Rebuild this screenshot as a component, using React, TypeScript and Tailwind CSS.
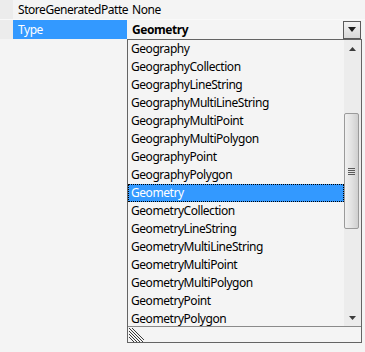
import React, { FC } from "react";

const items = [
  "Geography",
  "GeographyCollection",
  "GeographyLineString",
  "GeographyMultiLineString",
  "GeographyMultiPoint",
  "GeographyMultiPolygon",
  "GeographyPoint",
  "GeographyPolygon",
  "Geometry",
  "GeometryCollection",
  "GeometryLineString",
  "GeometryMultiLineString",
  "GeometryMultiPoint",
  "GeometryMultiPolygon",
  "GeometryPoint",
  "GeometryPolygon",
];

const selected = "Geometry";

const ScrollBar: FC = () => (
  <div className="w-[17px] h-full bg-[#ececec] flex flex-col items-center">
    <div className="h-[17px] w-full flex items-center justify-center">
      <svg width="7" height="4" viewBox="0 0 7 4">
        <polygon points="3.5,0 7,4 0,4" fill="#3c3c3c" />
      </svg>
    </div>
    <div className="h-[56px]" />
    <div className="w-[15px] h-[116px] -ml-[2px] rounded-[2px] border border-[#9a9a9a] bg-gradient-to-r from-[#f0f0f0] via-[#e2e2e2] to-[#cfcfcf] flex flex-col items-center justify-center gap-[1px]">
      <div className="w-[7px] h-[1px] bg-[#5a5a5a]" />
      <div className="w-[7px] h-[1px] bg-[#5a5a5a]" />
      <div className="w-[7px] h-[1px] bg-[#5a5a5a]" />
      <div className="w-[7px] h-[1px] bg-[#5a5a5a]" />
    </div>
    <div className="flex-1" />
    <div className="h-[17px] w-full flex items-center justify-center">
      <svg width="7" height="4" viewBox="0 0 7 4">
        <polygon points="0,0 7,0 3.5,4" fill="#3c3c3c" />
      </svg>
    </div>
  </div>
);

const App: FC = () => {
  return (
    <div className="w-[365px] h-[352px] bg-[#f4f4f4] text-[12px] tracking-[-0.45px] text-black font-['Noto_Sans',sans-serif] overflow-hidden">
      <div className="flex h-[20px] border-b border-[#f9f9f9]">
        <div className="w-[13px] bg-[#ececec]" />
        <div className="w-[114px] pl-[5px] leading-[19px] whitespace-nowrap">StoreGeneratedPatte</div>
        <div className="pl-[5px] leading-[19px]">None</div>
      </div>
      <div className="flex h-[19px]">
        <div className="w-[13px] bg-[#ececec]" />
        <div className="w-[114px] pl-[5px] leading-[19px] bg-[#3399ff] text-white">Type</div>
        <div className="w-[234px] flex items-center justify-between">
          <span className="pl-[5px] font-bold leading-[19px]">Geometry</span>
          <div className="w-[18px] h-[18px] border border-[#5a5a5a] bg-gradient-to-b from-[#f2f2f2] to-[#d8d8d8] flex items-center justify-center">
            <svg width="8" height="5" viewBox="0 0 8 5">
              <polygon points="0,0 8,0 4,5" fill="#1e1e1e" />
            </svg>
          </div>
        </div>
      </div>
      <div className="ml-[127px] w-[235px] h-[304px] border border-[#646464] bg-[#f4f4f4] flex flex-col">
        <div className="flex h-[286px]">
          <div className="flex-1 overflow-hidden">
            {items.map((it) => (
              <div
                key={it}
                className={
                  it === selected
                    ? "h-[18px] pl-[3px] leading-[18px] bg-[#3399ff] text-white outline outline-1 outline-dotted outline-black -outline-offset-1"
                    : "h-[18px] pl-[3px] leading-[18px] whitespace-nowrap"
                }
              >
                {it}
              </div>
            ))}
          </div>
          <ScrollBar />
        </div>
        <div className="flex-1 border-t border-[#8a8a8a] flex items-end">
          <svg width="16" height="15" viewBox="0 0 16 15">
            <g stroke="#3a3a3a" strokeWidth="1">
              <line x1="1" y1="1" x2="15" y2="15" />
              <line x1="1" y1="4" x2="12" y2="15" />
              <line x1="1" y1="7" x2="9" y2="15" />
              <line x1="1" y1="10" x2="6" y2="15" />
              <line x1="4" y1="1" x2="16" y2="13" />
            </g>
          </svg>
        </div>
      </div>
    </div>
  );
};

export default App;
